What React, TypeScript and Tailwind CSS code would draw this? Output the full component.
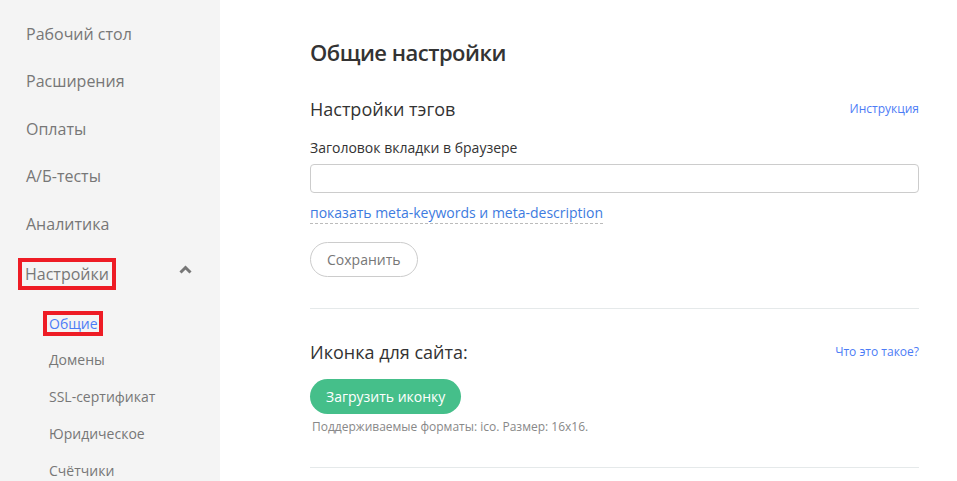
const navItems = ['Рабочий стол', 'Расширения', 'Оплаты', 'А/Б-тесты', 'Аналитика']
const subItems = ['Домены', 'SSL-сертификат', 'Юридическое', 'Счётчики']

function Sidebar() {
  return (
    <aside className="w-[220px] shrink-0 bg-[#f4f4f4] pt-[22px]">
      <ul>
        {navItems.map((item) => (
          <li key={item} className="h-[47.4px] pl-[26px] text-[16px] leading-[24px] text-[#777]">
            {item}
          </li>
        ))}
        {/* Settings, expanded */}
        <li className="mt-[-1px] flex h-[47.4px] items-start pl-[18px] pr-[28px]">
          <span className="border-4 border-[#ee1c25] px-[3px] text-[16px] leading-[24px] text-[#777]">
            Настройки
          </span>
          <svg className="ml-auto mt-[7px]" width="13" height="9" viewBox="0 0 13 9" fill="none">
            <path d="M1.5 7.5L6.5 2.5L11.5 7.5" stroke="#777" strokeWidth="3" />
          </svg>
        </li>
      </ul>
      <ul className="mt-[6px]">
        <li className="h-[37px] pl-[43px]">
          <span className="inline-block border-4 border-[#ee1c25] pl-[2px] pr-[1px] text-[14px] leading-[17px] text-[#4c7cf6]">
            Общие
          </span>
        </li>
        {subItems.map((item) => (
          <li key={item} className="h-[37px] pl-[49px] text-[14px] leading-[24px] text-[#777]">
            {item}
          </li>
        ))}
      </ul>
    </aside>
  )
}

export default function App() {
  return (
    <div className="flex h-[481px] overflow-hidden bg-white font-['Open_Sans',sans-serif]">
      <Sidebar />
      <main className="w-[609px] shrink-0 pl-[90px] pt-[36px] box-content">
        <h1 className="text-[22px] font-semibold leading-[32px] tracking-[-0.5px] text-[#333]">
          Общие настройки
        </h1>

        {/* Tags */}
        <div className="mt-[28px] flex items-center justify-between">
          <h2 className="text-[18px] leading-[26px] text-[#333]">Настройки тэгов</h2>
          <a className="text-[12px] text-[#4c7cf6]">Инструкция</a>
        </div>
        <label className="mt-[16px] block text-[14px] leading-[20px] text-[#333]">
          Заголовок вкладки в браузере
        </label>
        <input
          type="text"
          className="mt-[6px] block h-[29px] w-full rounded-[4px] border border-[#ccc] px-2"
        />
        <a className="mt-[10px] inline-block border-b border-dashed border-[#bbb] text-[14px] leading-[20px] text-[#3d7be0]">
          показать meta-keywords и meta-description
        </a>
        <div className="mt-[18px]">
          <button className="h-[35px] rounded-full border border-[#ccc] px-[16px] text-[14px] text-[#777]">
            Сохранить
          </button>
        </div>
        <hr className="mt-[31px] border-t border-[#e5e9ea]" />

        {/* Favicon */}
        <div className="mt-[30px] flex items-center justify-between">
          <h2 className="text-[18px] leading-[26px] text-[#333]">Иконка для сайта:</h2>
          <a className="text-[12px] text-[#4c7cf6]">Что это такое?</a>
        </div>
        <button className="mt-[14px] h-[35px] rounded-full bg-[#45bf8a] px-[16px] text-[14px] text-white">
          Загрузить иконку
        </button>
        <p className="mt-[4px] pl-[2px] text-[12px] leading-[18px] text-[#888]">
          Поддерживаемые форматы: ico. Размер: 16x16.
        </p>
        <hr className="mt-[31px] border-t border-[#e5e9ea]" />
      </main>
    </div>
  )
}
